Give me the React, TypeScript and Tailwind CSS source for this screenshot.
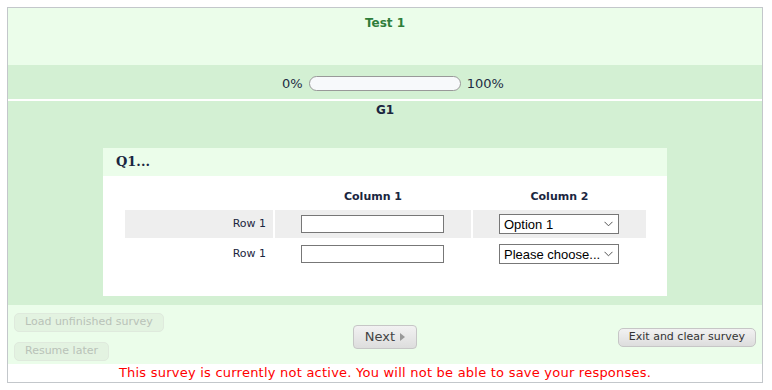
import React from "react";

function Chevron() {
  return (
    <svg width="9" height="6" viewBox="0 0 9 6" className="shrink-0">
      <path d="M0.5 0.8 L4.5 4.8 L8.5 0.8" fill="none" stroke="#555" strokeWidth="1" />
    </svg>
  );
}

function FakeSelect({ label }: { label: string }) {
  return (
    <div className="w-[120px] h-[20px] border border-[#777] bg-white flex items-center justify-between pl-[4px] pr-[5px] text-black" style={{ fontFamily: "'Liberation Sans', Arial, sans-serif" }}>
      <span className="text-[13px] leading-none">{label}</span>
      <Chevron />
    </div>
  );
}

function FakeInput() {
  return <div className="w-[143px] h-[18px] border border-[#777] bg-white" />;
}

export default function App() {
  return (
    <div className="w-[772px] h-[390px] bg-white" style={{ fontFamily: "'DejaVu Sans', Verdana, sans-serif" }}>
      <div className="ml-[7px] pt-[7px]">
        <div className="w-[756px] border border-[#c3c7cb]">
          {/* header */}
          <div className="h-[57px] bg-[#ebfdea] flex justify-center pt-[6px]">
            <span className="text-[12px] font-bold text-[#2f7d3a]">Test 1</span>
          </div>
          {/* progress */}
          <div className="h-[34px] bg-[#d3f0d3] flex items-center justify-center gap-[6px] pl-[16px] text-[13px] text-[#1e2d44]">
            <span className="mt-[3px]">0%</span>
            <div className="w-[152px] h-[15px] rounded-full border border-[#999] bg-[#f7f9fb] mt-[3px]" />
            <span className="mt-[3px]">100%</span>
          </div>
          <div className="h-[2px] bg-white" />
          {/* group */}
          <div className="bg-[#d3f0d3] pb-[9px]">
            <div className="text-center text-[12px] font-bold text-[#1a2640] h-[47px]">G1</div>
            <div className="mx-[95px] bg-white pb-[28px]">
              <div className="h-[28px] bg-[#ebfdea] flex items-center pl-[13px]">
                <span className="text-[13px] font-bold text-[#1a2640]" style={{ fontFamily: "'DejaVu Serif', Georgia, serif" }}>Q1...</span>
              </div>
              <div className="mx-[22px] mt-[10px] text-[11px] text-[#1a2640]">
                <div className="grid grid-cols-[148px_196px_173px] gap-x-[2px] h-[24px] items-start">
                  <div />
                  <div className="text-center font-bold text-[11px] pt-[3px]">Column 1</div>
                  <div className="text-center font-bold text-[11px] pt-[3px]">Column 2</div>
                </div>
                <div className="grid grid-cols-[148px_196px_173px] gap-x-[2px] h-[28px]">
                  <div className="bg-[#eeeeee] flex items-center justify-end pr-[7px]">Row 1</div>
                  <div className="bg-[#eeeeee] flex items-center pl-[26px]"><FakeInput /></div>
                  <div className="bg-[#eeeeee] flex items-center pl-[26px]"><FakeSelect label="Option 1" /></div>
                </div>
                <div className="h-[2px]" />
                <div className="grid grid-cols-[148px_196px_173px] gap-x-[2px] h-[28px]">
                  <div className="flex items-center justify-end pr-[7px]">Row 1</div>
                  <div className="flex items-center pl-[26px]"><FakeInput /></div>
                  <div className="flex items-center pl-[26px]"><FakeSelect label="Please choose..." /></div>
                </div>
              </div>
            </div>
          </div>
          {/* footer */}
          <div className="h-[59px] bg-[#ebfdea] flex items-start px-[6px] pt-[8px]">
            <div className="w-[339px] flex flex-col items-start gap-[10px]">
              <div className="h-[19px] px-[10px] flex items-center rounded-[5px] border border-[#dfeadd] bg-[#e3f3e1] text-[11px] text-[#b9c2b8]">Load unfinished survey</div>
              <div className="h-[19px] px-[10px] flex items-center rounded-[5px] border border-[#dfeadd] bg-[#e3f3e1] text-[11px] text-[#b9c2b8]">Resume later</div>
            </div>
            <div className="w-[64px] h-[24px] mt-[12px] rounded-[4px] border border-[#c6c6c6] bg-gradient-to-b from-[#f2f2f2] to-[#dddddd] flex items-center justify-center gap-[5px] text-[13px] text-[#444]">
              <span>Next</span>
              <svg width="5" height="8" viewBox="0 0 5 8"><path d="M0 0 L5 4 L0 8 Z" fill="#999" /></svg>
            </div>
            <div className="flex-1" />
            <div className="h-[19px] mt-[15px] px-[10px] flex items-center rounded-[5px] border border-[#c6c6c6] bg-gradient-to-b from-[#f2f2f2] to-[#dddddd] text-[11px] text-[#333]">Exit and clear survey</div>
          </div>
          <div className="h-[18px] bg-white flex justify-center items-center text-[13px] text-[#ff0000] tracking-[0.23px]">
            This survey is currently not active. You will not be able to save your responses.
          </div>
        </div>
      </div>
    </div>
  );
}
